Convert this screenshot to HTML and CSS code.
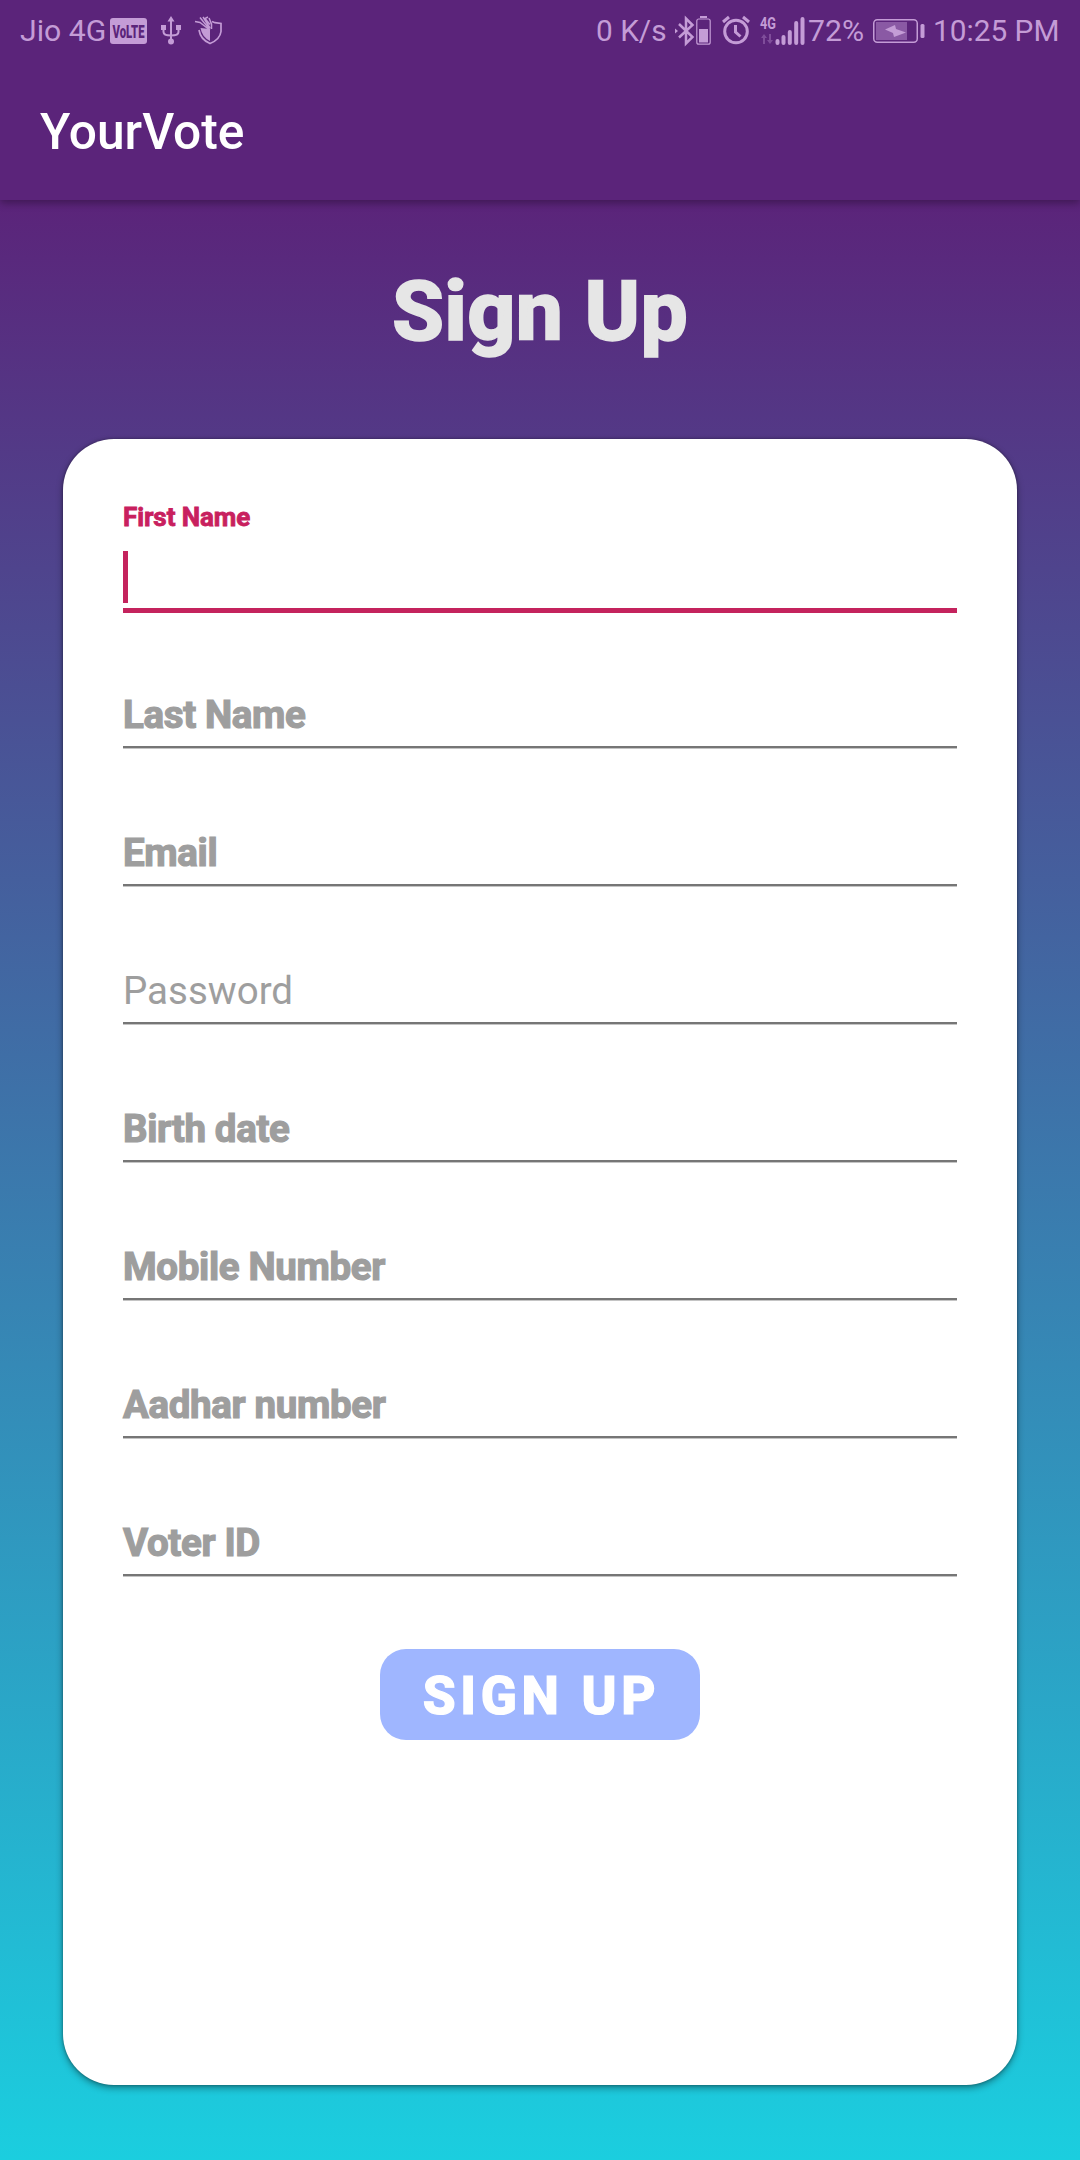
FILE: index.html
```html
<!DOCTYPE html>
<html lang="en">
<head>
<meta charset="utf-8">
<title>YourVote</title>
<link rel="stylesheet" href="styles.css">
</head>
<body>
<div class="screen">
  <header class="top">
    <div class="status">
      <div class="status-left">
        <span class="carrier">Jio 4G</span>
        <svg class="volte" width="37" height="26" viewBox="0 0 37 26">
          <rect width="37" height="26" rx="3" fill="currentColor"/>
          <text class="volte-text" x="2.500" y="19.500" textLength="32" lengthAdjust="spacingAndGlyphs">VoLTE</text>
        </svg>
        <svg class="usb" width="20" height="30" viewBox="0 0 20 30" fill="none" stroke="currentColor" stroke-width="2">
          <path d="M10 4V26M2.500 12v4q0 3.500 7.500 3.500q7.500 0 7.500-3.500V12"/>
          <path d="M10 0l3.500 5.500h-7zM0 9h5v5H0zM15 9h5v5h-5z" fill="currentColor" stroke="none"/>
          <circle cx="10" cy="25.500" r="3" fill="currentColor" stroke="none"/>
        </svg>
        <svg class="shield" width="28" height="29" viewBox="0 0 28 29" fill="none" stroke="currentColor" stroke-width="1.700">
          <path d="M17 5.500l3 1.200 6 .8v8q-1 8-11 12Q5.500 23.500 4 14"/>
          <path d="M5.500 12l9.500 1v12Q7 21 5.500 12z" fill="currentColor" stroke="none"/>
          <path d="M0 5.500l5 1 9 7M5 1.500l4 5 6 7M8 1l7 11M13 1l-3 1.500 5 6M14 2l2.500 6v5" stroke-width="1.500"/>
        </svg>
      </div>
      <div class="status-right">
        <span class="speed">0 K/s</span>
        <svg class="bt" width="37" height="30" viewBox="0 0 37 30" fill="none" stroke="currentColor" stroke-width="2.500">
          <path d="M4 8l13.500 13-6.500 6.500V2.500L17.500 9 4 21.500"/>
          <path d="M0 12.500l3 2.500-3 2.500z" fill="currentColor" stroke="none"/>
          <rect x="21.800" y="3" width="13.400" height="25.200" rx="2" stroke-width="1.200"/>
          <path d="M25 0h7v2h-7zM24 13h9v13.500h-9z" fill="currentColor" stroke="none"/>
        </svg>
        <svg class="alarm" width="28" height="29" viewBox="0 0 28 29" fill="none" stroke="currentColor" stroke-width="3">
          <circle cx="14" cy="15.500" r="11.300"/>
          <path d="M13.500 9v7l5 4.500M1 6l6-5M21 1l6 5"/>
        </svg>
        <svg class="signal" width="45" height="29" viewBox="0 0 45 29">
          <text class="net" x="0" y="12.500" textLength="16" lengthAdjust="spacingAndGlyphs">4G</text>
          <path class="dim" d="M4 18l3 4H5v6H3v-6H1zM10 28l-3-4h2v-6h2v6h2z"/>
          <path d="M17.500 27v-2M23.500 27v-6M29.800 27V16M36.200 27V7M42.500 27V3" fill="none" stroke="currentColor" stroke-width="4" stroke-linecap="round"/>
        </svg>
        <span class="pct">72%</span>
        <svg class="battery" width="52" height="24" viewBox="0 0 52 24">
          <rect x=".75" y=".75" width="43.500" height="22.500" rx="3.500" fill="none" stroke="currentColor" stroke-width="1.500"/>
          <rect x="3" y="3" width="31" height="18" fill="currentColor" opacity=".45"/>
          <path d="M12 10.500l10-4.500 1 4 10 3.500-12 4.500-1-4z" fill="currentColor"/>
          <rect x="47.500" y="5" width="4" height="14" rx="1.500" fill="currentColor"/>
        </svg>
        <span class="clock">10:25 PM</span>
      </div>
    </div>
    <div class="appbar">YourVote</div>
  </header>
  <main class="content">
    <h1 class="title">Sign Up</h1>
    <form class="card">
      <div class="field focused"><label class="label">First Name</label><span class="caret"></span></div>
      <div class="field"><label class="label">Last Name</label></div>
      <div class="field"><label class="label">Email</label></div>
      <div class="field"><label class="label regular">Password</label></div>
      <div class="field"><label class="label">Birth date</label></div>
      <div class="field"><label class="label">Mobile Number</label></div>
      <div class="field"><label class="label">Aadhar number</label></div>
      <div class="field"><label class="label">Voter ID</label></div>
      <button class="submit" type="button">SIGN UP</button>
    </form>
  </main>
</div>
</body>
</html>
```
FILE: styles.css
```css
* { box-sizing: border-box; }

body {
  margin: 0;
  font-family: Roboto, "Liberation Sans", sans-serif;
}

.screen {
  width: 1080px;
  height: 2160px;
  display: flex;
  flex-direction: column;
  overflow: hidden;
  background: #5b247a;
}

.top {
  height: 200px;
  flex: none;
  background: #5b247a;
  box-shadow: 0 3px 8px rgba(0, 0, 0, .32);
  z-index: 1;
}

.status {
  height: 61px;
  padding: 0 20px;
  display: flex;
  justify-content: space-between;
  color: #c49cd6;
  font-size: 29.8px;
  line-height: 60px;
  white-space: nowrap;
}

.status-left,
.status-right { display: flex; align-items: center; }

.status svg { flex: none; display: block; overflow: visible; }

.carrier { width: 90px; font-size: 30.2px; }
.volte-text { font: 900 18px Roboto, sans-serif; fill: #5b247a; }
.usb { margin-left: 14px; }
.shield { margin-left: 14px; }
.speed { width: 80px; padding-left: 1px; }
.alarm { margin-left: 10px; }
.signal { margin-left: 10px; }
.net { font: 700 16px Roboto, sans-serif; fill: currentColor; }
.dim { fill: currentColor; opacity: .35; }
.pct { width: 65px; margin-left: 3px; font-size: 30.2px; }
.clock { width: 127px; margin-left: 8px; }

.appbar {
  height: 139px;
  padding-left: 40px;
  color: #fff;
  font-size: 49.7px;
  font-weight: 500;
  line-height: 142px;
}

.content {
  flex: 1;
  display: flex;
  flex-direction: column;
  align-items: center;
  background: linear-gradient(#5b247a, #1bcedf);
}

.title {
  margin: 61px 0 0;
  height: 178px;
  color: #e6e6e6;
  font-size: 84px;
  font-weight: 800;
  line-height: 101px;
  letter-spacing: .3px;
  -webkit-text-stroke: 1.500px #e6e6e6;
}

.card {
  width: 954px;
  height: 1646px;
  padding: 60px 60px 0;
  display: flex;
  flex-direction: column;
  border-radius: 51px;
  background: #fff;
  box-shadow: 0 3px 7px rgba(0, 0, 0, .38), 0 0 3px rgba(0, 0, 0, .35);
}

.field {
  height: 138px;
  display: flex;
  flex-direction: column;
  justify-content: flex-end;
  padding-bottom: 8px;
  border-bottom: 2px solid #767676;
  box-shadow: 0 1px 0 #c4c4c4;
}

.label {
  color: #9e9e9e;
  font-size: 38.5px;
  font-weight: 700;
  letter-spacing: -.35px;
  line-height: 46px;
  -webkit-text-stroke: 1.200px #9e9e9e;
}

.regular {
  font-weight: 400;
  letter-spacing: 0;
  -webkit-text-stroke: 0;
}

.focused {
  height: 114px;
  justify-content: space-between;
  padding-bottom: 5px;
  border-bottom: 5px solid #c4235d;
  box-shadow: none;
}

.focused .label {
  color: #c8205e;
  font-size: 26px;
  letter-spacing: -.1px;
  line-height: 37px;
  -webkit-text-stroke: .8px #c8205e;
}

.caret { width: 5px; height: 52px; background: #c4235d; }

.field:nth-child(2) { height: 135px; }

.submit {
  width: 320px;
  height: 91px;
  margin: 73px auto 0;
  padding: 4px 0 0 3px;
  border: 0;
  border-radius: 26px;
  background: #9fb6ff;
  color: #fff;
  font: 800 53px/87px Roboto, "Liberation Sans", sans-serif;
  letter-spacing: 4.700px;
  -webkit-text-stroke: 1.200px #fff;
}
```
